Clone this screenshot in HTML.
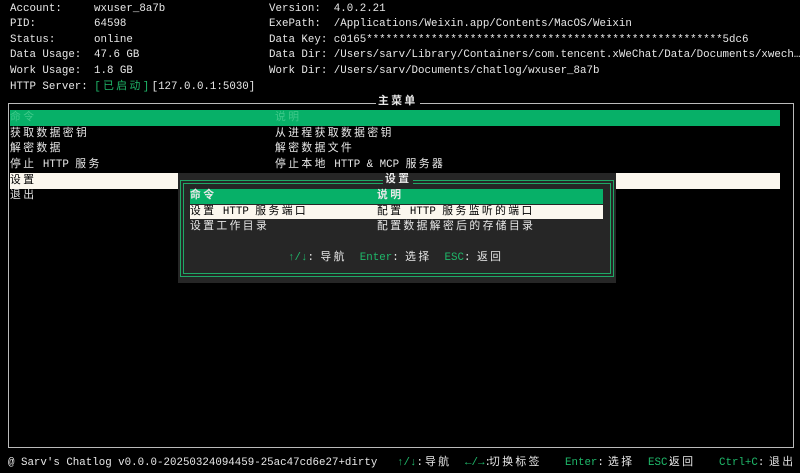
<!DOCTYPE html>
<html><head><meta charset="utf-8"><style>
body{margin:0;width:800px;height:473px;background:#000;overflow:hidden;position:relative;font-family:"Liberation Mono","Noto Sans CJK SC",monospace;font-size:10.8px;color:#e8e8e8}
.t{position:absolute;white-space:pre;line-height:15px}
.k{letter-spacing:2.4px}
.g{color:#1fb86a}
.b{position:absolute}
</style></head><body>
<div class="t" style="left:10px;top:2px">Account:</div><div class="t" style="left:94px;top:2px">wxuser_8a7b</div>
<div class="t" style="left:10px;top:17px">PID:</div><div class="t" style="left:94px;top:17px">64598</div>
<div class="t" style="left:10px;top:33px">Status:</div><div class="t" style="left:94px;top:33px">online</div>
<div class="t" style="left:10px;top:48px">Data Usage:</div><div class="t" style="left:94px;top:48px">47.6 GB</div>
<div class="t" style="left:10px;top:64px">Work Usage:</div><div class="t" style="left:94px;top:64px">1.8 GB</div>
<div class="t" style="left:10px;top:80px">HTTP Server: <span class="g k">[已启动]</span>[127.0.0.1:5030]</div>
<div class="t" style="left:269px;top:2px">Version:  4.0.2.21</div>
<div class="t" style="left:269px;top:17px">ExePath:  /Applications/Weixin.app/Contents/MacOS/Weixin</div>
<div class="t" style="left:269px;top:33px">Data Key: c0165*******************************************************5dc6</div>
<div class="t" style="left:269px;top:48px">Data Dir: /Users/sarv/Library/Containers/com.tencent.xWeChat/Data/Documents/xwech…</div>
<div class="t" style="left:269px;top:64px">Work Dir: /Users/sarv/Documents/chatlog/wxuser_8a7b</div>

<div class="b" style="left:8px;top:103px;width:784px;height:343px;border:1px solid #bbb"></div>
<div class="t k" style="left:376px;top:95px;background:#000;padding:0 2px;font-weight:bold">主菜单</div>
<div class="b" style="left:10px;top:110px;width:770px;height:16px;background:#07b068"></div>
<div class="t k" style="left:10px;top:111px;color:#3fc98a">命令</div>
<div class="t k" style="left:275px;top:111px;color:#3fc98a">说明</div>
<div class="t" style="left:10px;top:127px"><span class="k">获取数据密钥</span></div><div class="t" style="left:275px;top:127px"><span class="k">从进程获取数据密钥</span></div>
<div class="t" style="left:10px;top:142px"><span class="k">解密数据</span></div><div class="t" style="left:275px;top:142px"><span class="k">解密数据文件</span></div>
<div class="t" style="left:10px;top:158px"><span class="k">停止</span> HTTP <span class="k">服务</span></div><div class="t" style="left:275px;top:158px"><span class="k">停止本地</span> HTTP &amp; MCP <span class="k">服务器</span></div>
<div class="b" style="left:10px;top:173px;width:770px;height:16px;background:#fbf7ee"></div>
<div class="t k" style="left:10px;top:174px;color:#000">设置</div>
<div class="t k" style="left:10px;top:189px">退出</div>

<div class="b" style="left:178px;top:173px;width:438px;height:110px;background:#262626"></div>
<div class="b" style="left:180px;top:180px;width:432px;height:95px;border:1px solid #1fa866"></div>
<div class="b" style="left:183px;top:183px;width:426px;height:89px;border:1px solid #1fa866"></div>
<div class="t k" style="left:383px;top:173px;background:#262626;padding:0 2px;font-weight:bold">设置</div>
<div class="b" style="left:190px;top:189px;width:413px;height:15px;background:#07b068"></div>
<div class="t k" style="left:190px;top:189px;font-weight:bold">命令</div><div class="t k" style="left:377px;top:189px;font-weight:bold">说明</div>
<div class="b" style="left:190px;top:205px;width:413px;height:14px;background:#fbf7ee"></div>
<div class="t" style="left:190px;top:205px;color:#000"><span class="k">设置</span> HTTP <span class="k">服务端口</span></div><div class="t" style="left:377px;top:205px;color:#000"><span class="k">配置</span> HTTP <span class="k">服务监听的端口</span></div>
<div class="t k" style="left:190px;top:220px">设置工作目录</div><div class="t k" style="left:377px;top:220px">配置数据解密后的存储目录</div>
<div class="t" style="left:288px;top:251px"><span class="g">↑/↓</span>: <span class="k">导航</span>  <span class="g">Enter</span>: <span class="k">选择</span>  <span class="g">ESC</span>: <span class="k">返回</span></div>

<div class="t" style="left:8px;top:456px">@ Sarv's Chatlog v0.0.0-20250324094459-25ac47cd6e27+dirty</div>
<div class="t" style="left:397px;top:456px"><span class="g">↑/↓</span>:</div><div class="t k" style="left:425px;top:456px">导航</div>
<div class="t" style="left:465px;top:456px"><span class="g">←/→</span>:</div><div class="t k" style="left:489px;top:456px">切换标签</div>
<div class="t" style="left:565px;top:456px"><span class="g">Enter</span>:</div><div class="t k" style="left:608px;top:456px">选择</div>
<div class="t" style="left:648px;top:456px"><span class="g">ESC</span>:</div><div class="t k" style="left:669px;top:456px">返回</div>
<div class="t" style="left:719px;top:456px"><span class="g">Ctrl+C</span>:</div><div class="t k" style="left:769px;top:456px">退出</div>
</body></html>
